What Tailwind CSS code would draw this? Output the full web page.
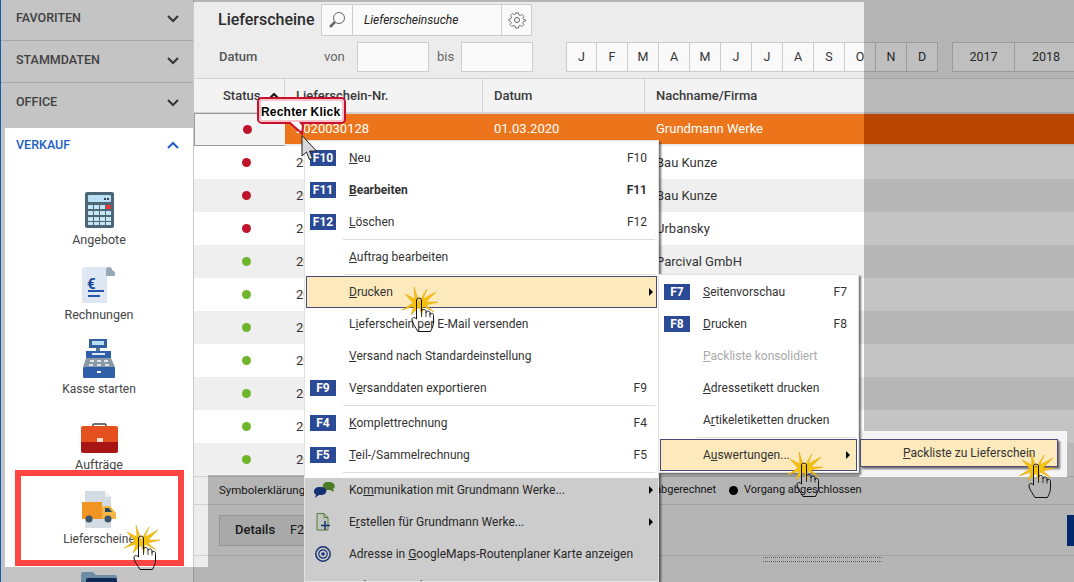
<!DOCTYPE html>
<html lang="de">
<head>
  <meta charset="UTF-8" />
  <title>Lieferscheine</title>
  <script src="https://cdn.jsdelivr.net/npm/@tailwindcss/browser@4"></script>
</head>
<body class="relative w-[1074px] h-[582px] overflow-hidden bg-white font-['Roboto',sans-serif] text-[12px] text-[#333] whitespace-nowrap">

  <!-- shared hand cursor with click star -->
  <svg class="hidden">
    <defs>
      <linearGradient id="handFill" x1="0" y1="0" x2="0" y2="1">
        <stop offset="0.55" stop-color="#ffffff" />
        <stop offset="1" stop-color="#b9b9b9" />
      </linearGradient>
    </defs>
    <symbol id="hand" viewBox="0 0 36 46">
      <polygon points="17,15 25,2 21,12 34,5 24,15 36,15 24,18 32,25 21,19 20,28 17,20 9,28 12,19 0,23 11,16 3,7 13,12 12,0" fill="#f4c20d" stroke="#e3a008" stroke-width="0.5" />
      <path d="M14.500 13c0-2.500 5-2.500 5 0V24c.5-2 4.500-2 4.500.5v1c.5-2 4-2 4 .5v1.500c.5-1.800 3.500-1.500 3.500 1V35c0 4-1.500 6-3 9.500H16C13.500 40 10.500 37 10 33c-.3-2.500 2-3.500 4.500-1z" fill="url(#handFill)" stroke="#111" stroke-width="1" />
      <path d="M24 25v5M28 26.500v4M19.500 24v6" fill="none" stroke="#111" stroke-width="0.8" />
    </symbol>
  </svg>

  <div class="flex h-full">
    <!-- left navigation -->
    <aside class="w-[194px] h-full shrink-0 bg-white border-r border-[#c9c9c9] flex flex-col">
      <div class="h-[41px] shrink-0 pl-4 pr-[14px] pb-[3px] border-b border-[#d9d9d9] flex items-center justify-between font-medium text-[12.5px] text-[#555]">
        <span>FAVORITEN</span>
        <svg width="12" height="8" viewBox="0 0 12 8" fill="none" stroke="#444" stroke-width="2"><path d="M1 1l5 5 5-5" /></svg>
      </div>
      <div class="h-[42px] shrink-0 pl-4 pr-[14px] pb-[2px] border-b border-[#d9d9d9] flex items-center justify-between font-medium text-[12.5px] text-[#555]">
        <span>STAMMDATEN</span>
        <svg width="12" height="8" viewBox="0 0 12 8" fill="none" stroke="#444" stroke-width="2"><path d="M1 1l5 5 5-5" /></svg>
      </div>
      <div class="h-[42px] shrink-0 pl-4 pr-[14px] pb-[3px] flex items-center justify-between font-medium text-[12.5px] text-[#555]">
        <span>OFFICE</span>
        <svg width="12" height="8" viewBox="0 0 12 8" fill="none" stroke="#444" stroke-width="2"><path d="M1 1l5 5 5-5" /></svg>
      </div>
      <div class="h-[51px] shrink-0 pl-4 pr-[14px] pt-[11px] flex items-start justify-between font-medium text-[12.5px] text-[#2160c4]">
        <span class="leading-[18px]">VERKAUF</span>
        <svg class="mt-[5px]" width="12" height="8" viewBox="0 0 12 8" fill="none" stroke="#2160c4" stroke-width="2"><path d="M1 7l5-5 5 5" /></svg>
      </div>

      <div class="h-[75px] shrink-0 flex flex-col items-center pl-[5px] text-[#444]">
        <div class="h-[52px] flex items-end">
          <svg width="29" height="36" viewBox="0 0 29 36">
            <rect width="29" height="36" rx="2" fill="#4d6674" />
            <rect x="3" y="3" width="23" height="7" rx="1" fill="#b9e0f4" />
            <rect x="19" y="6" width="2" height="2" fill="#33434d" /><rect x="22" y="6" width="2" height="2" fill="#33434d" />
            <g fill="#c4e6f6">
              <rect x="3" y="13" width="5" height="4" /><rect x="9" y="13" width="5" height="4" /><rect x="15" y="13" width="5" height="4" /><rect x="21" y="13" width="5" height="4" fill="#e5383b" />
              <rect x="3" y="19" width="5" height="4" /><rect x="9" y="19" width="5" height="4" /><rect x="15" y="19" width="5" height="4" /><rect x="21" y="19" width="5" height="4" />
              <rect x="3" y="25" width="5" height="4" /><rect x="9" y="25" width="5" height="4" /><rect x="15" y="25" width="5" height="4" /><rect x="21" y="25" width="5" height="4" />
              <rect x="3" y="30" width="5" height="3" /><rect x="9" y="30" width="5" height="3" /><rect x="15" y="30" width="5" height="3" /><rect x="21" y="30" width="5" height="3" />
            </g>
          </svg>
        </div>
        <span class="h-[23px] leading-[23px] text-[12.5px]">Angebote</span>
      </div>
      <div class="h-[75px] shrink-0 flex flex-col items-center pl-[5px] text-[#444]">
        <div class="h-[52px] flex items-end relative">
          <svg width="34" height="36" viewBox="0 0 34 36">
            <path d="M0 3a3 3 0 0 1 3-3h22v36H0z" fill="#dfe7f4" />
            <path d="M24 9V3a3 3 0 0 1 6 0 4 4 0 0 1 3 3v3z" fill="#96a9b3" />
            <path d="M6 24h16M6 29h12" stroke="#2458a8" stroke-width="2" />
          </svg>
          <span class="absolute left-[5px] top-[24px] text-[15px] leading-[18px] font-bold text-[#174a96]">€</span>
        </div>
        <span class="h-[23px] leading-[23px] text-[12.5px]">Rechnungen</span>
      </div>
      <div class="h-[75px] shrink-0 flex flex-col items-center pl-[5px] text-[#444]">
        <div class="h-[52px] flex items-end">
          <svg width="32" height="39" viewBox="0 0 32 39">
            <rect x="6" y="0" width="18" height="9" fill="#33609f" /><rect x="9" y="2" width="12" height="4" fill="#b9e0f4" />
            <rect x="13" y="9" width="4" height="3" fill="#5f7c8c" />
            <rect x="3" y="12" width="25" height="7" fill="#2f5fa8" /><rect x="9" y="14" width="13" height="2" fill="#dfe7f4" />
            <path d="M3 19h25l4 9H0z" fill="#8b9aa5" />
            <g fill="#dfe4e8"><rect x="7" y="21" width="4" height="2" /><rect x="14" y="21" width="4" height="2" /><rect x="21" y="21" width="4" height="2" /><rect x="6" y="25" width="4" height="2" /><rect x="14" y="25" width="4" height="2" /><rect x="22" y="25" width="4" height="2" /></g>
            <rect x="0" y="28" width="32" height="11" rx="1" fill="#2f5fa8" /><rect x="14" y="32" width="4" height="2" fill="#fff" />
          </svg>
        </div>
        <span class="h-[23px] leading-[23px]">Kasse starten</span>
      </div>
      <div class="h-[75px] shrink-0 flex flex-col items-center pl-[5px] text-[#444]">
        <div class="h-[52px] flex items-end">
          <svg width="37" height="30" viewBox="0 0 37 30">
            <path d="M12 4V2a1 1 0 0 1 1-1h11a1 1 0 0 1 1 1v2" fill="none" stroke="#444" stroke-width="1.500" />
            <path d="M2 3h33a2 2 0 0 1 2 2v14H0V5a2 2 0 0 1 2-2z" fill="#e5501f" />
            <path d="M0 19h37v9a2 2 0 0 1-2 2H2a2 2 0 0 1-2-2z" fill="#a81515" />
            <rect x="16" y="15" width="6" height="4" fill="#fbdccb" />
          </svg>
        </div>
        <span class="h-[23px] leading-[23px] text-[12.5px]">Aufträge</span>
      </div>
      <div class="h-[75px] shrink-0 flex flex-col items-center pl-[5px] text-[#444]">
        <div class="h-[52px] flex items-end">
          <svg width="34" height="37" viewBox="0 0 34 37">
            <path d="M3 0h20l6 6v31H3z" fill="#d3dce3" /><path d="M23 0v6h6z" fill="#eef2f5" />
            <rect x="0" y="11" width="20" height="17" fill="#f09423" />
            <path d="M20 15h8l6 7v6H20z" fill="#f6b544" /><path d="M23 17h4l3 4h-7z" fill="#2d4a63" />
            <circle cx="7" cy="28" r="3.500" fill="#39566e" /><circle cx="26" cy="28" r="3.500" fill="#39566e" />
          </svg>
        </div>
        <span class="h-[23px] leading-[23px]">Lieferscheine</span>
      </div>
      <div class="h-[75px] shrink-0 flex flex-col items-center pl-[5px]">
        <div class="h-[52px] flex items-end">
          <svg width="36" height="31" viewBox="0 0 36 31">
            <path d="M0 2a2 2 0 0 1 2-2h10l3 3h19a2 2 0 0 1 2 2v24H0z" fill="#8fb6d6" />
            <rect x="5" y="6" width="31" height="25" rx="2" fill="#12386f" />
          </svg>
        </div>
      </div>
    </aside>

    <!-- main column -->
    <main class="flex-1 min-w-0 h-full bg-[#ececec] flex flex-col overflow-hidden">
      <header class="h-[78px] shrink-0 pt-[4px] flex flex-col">
        <div class="h-[32px] flex items-center pl-[24px]">
          <h1 class="w-[103px] text-[16px] font-medium text-[#2b2b2b]">Lieferscheine</h1>
          <div class="flex h-[32px] w-[211px] bg-[#fafafa] border border-[#ccc]">
            <div class="w-[31px] border-r border-[#ccc] flex items-center justify-center">
              <svg width="18" height="18" viewBox="0 0 18 18" fill="none"><circle cx="11" cy="7" r="5.500" stroke="#666" stroke-width="1" /><path d="M7 11l-5 5" stroke="#666" stroke-width="2.500" /></svg>
            </div>
            <div class="w-[148px] pl-[11px] flex items-center italic text-[#222]">Lieferscheinsuche</div>
            <div class="flex-1 border-l border-[#ccc] flex items-center justify-center">
              <svg width="18" height="18" viewBox="0 0 18 18" fill="none" stroke="#666" stroke-width="1"><path d="M7.500 1h3l.5 2.300 1.600.7 2-1.300 2.100 2.100-1.300 2 .7 1.600 2.300.5v1.200l-2.300.5-.7 1.600 1.300 2-2.100 2.100-2-1.300-1.600.7-.5 2.300h-3l-.5-2.300-1.600-.7-2 1.300-2.100-2.100 1.300-2-.7-1.600L0 10V8l2.300-.5.7-1.600-1.300-2 2.100-2.100 2 1.300 1.600-.7z" transform="scale(.9) translate(1 1)" /><circle cx="9" cy="9" r="2.500" /></svg>
            </div>
          </div>
        </div>
        <div class="h-[30px] mt-[6px] flex items-center pl-[25px] text-[#444] text-[13px]">
          <span class="w-[105px] shrink-0 font-medium text-[#555]">Datum</span>
          <span class="w-[33px] shrink-0 text-[#666]">von</span>
          <div class="w-[72px] h-[30px] shrink-0 bg-[#fafafa] border border-[#ccc]"></div>
          <span class="w-[32px] shrink-0 pl-[8px] text-[#666]">bis</span>
          <div class="w-[72px] h-[30px] shrink-0 bg-[#fafafa] border border-[#ccc]"></div>
          <div class="ml-[33px] shrink-0 flex text-[12.5px] text-[#333]">
            <span class="w-[31px] h-[30px] bg-[#f9f9f9] border border-[#ccc] flex items-center justify-center">J</span>
            <span class="w-[31px] h-[30px] bg-[#f9f9f9] border border-l-0 border-[#ccc] flex items-center justify-center">F</span>
            <span class="w-[31px] h-[30px] bg-[#f9f9f9] border border-l-0 border-[#ccc] flex items-center justify-center">M</span>
            <span class="w-[31px] h-[30px] bg-[#f9f9f9] border border-l-0 border-[#ccc] flex items-center justify-center">A</span>
            <span class="w-[31px] h-[30px] bg-[#f9f9f9] border border-l-0 border-[#ccc] flex items-center justify-center">M</span>
            <span class="w-[31px] h-[30px] bg-[#f9f9f9] border border-l-0 border-[#ccc] flex items-center justify-center">J</span>
            <span class="w-[31px] h-[30px] bg-[#f9f9f9] border border-l-0 border-[#ccc] flex items-center justify-center">J</span>
            <span class="w-[31px] h-[30px] bg-[#f9f9f9] border border-l-0 border-[#ccc] flex items-center justify-center">A</span>
            <span class="w-[31px] h-[30px] bg-[#f9f9f9] border border-l-0 border-[#ccc] flex items-center justify-center">S</span>
            <span class="w-[31px] h-[30px] bg-[#f9f9f9] border border-l-0 border-[#ccc] flex items-center justify-center">O</span>
            <span class="w-[31px] h-[30px] bg-[#f9f9f9] border border-l-0 border-[#ccc] flex items-center justify-center">N</span>
            <span class="w-[31px] h-[30px] bg-[#f9f9f9] border border-l-0 border-[#ccc] flex items-center justify-center">D</span>
            <span class="ml-[14px] w-[63px] h-[30px] bg-[#f9f9f9] border border-[#ccc] flex items-center justify-center">2017</span>
            <span class="w-[63px] h-[30px] bg-[#f9f9f9] border border-l-0 border-[#ccc] flex items-center justify-center">2018</span>
          </div>
        </div>
      </header>

      <!-- table -->
      <div class="h-[36px] shrink-0 bg-[#f3f3f3] border-t border-b-2 border-[#d2d2d2] grid grid-cols-[91px_198px_162px_1fr] items-center font-medium text-[13px] text-[#3a3a3a]">
        <div class="h-full pl-[29px] pr-[5px] pt-px flex items-center justify-between border-r border-[#d2d2d2]">Status
          <svg width="10" height="6" viewBox="0 0 10 6" fill="none" stroke="#111" stroke-width="2"><path d="M1 5l4-4 4 4" /></svg>
        </div>
        <div class="h-full pl-[11px] pt-px flex items-center border-r border-[#d2d2d2]">Lieferschein-Nr.</div>
        <div class="h-full pl-[11px] pt-px flex items-center border-r border-[#d2d2d2]">Datum</div>
        <div class="h-full pl-[11px] pt-px flex items-center">Nachname/Firma</div>
      </div>
      <div id="rows" class="flex flex-col shrink-0 text-[13px]"></div>

      <!-- legend and details -->
      <div class="h-[29px] shrink-0 border-y border-[#d2d2d2] pl-[25px] flex items-center text-[11px]">
        <span class="w-[380px] shrink-0 text-[11.5px] text-[#222]">Symbolerklärung:</span>
        <span class="w-[117px] shrink-0 text-right text-[#222]">Vorgang abgerechnet</span>
        <span class="w-[9px] h-[9px] shrink-0 ml-[13px] mr-[6px] rounded-full bg-black"></span>
        <span class="text-[#222]">Vorgang abgeschlossen</span>
      </div>
      <div class="h-[51px] shrink-0 border-b border-[#d2d2d2] pl-[25px] flex items-center justify-between">
        <div class="w-[120px] h-[31px] bg-[#dcdcdc] border border-[#c2c2c2] pl-[15px] flex items-center font-medium text-[13px] text-[#222]">Details<span class="ml-[15px] font-normal text-[12.5px]">F2</span></div>
        <div class="w-[7px] h-[31px] bg-[#00378c]"></div>
      </div>
      <div class="ml-[569px] mt-[1px] w-[119px] h-[5px] border-y border-dotted border-[#777]"></div>
    </main>
  </div>

  <!-- dimmed parts of the screen -->
  <div class="absolute left-0 top-0 w-[193px] h-[128px] bg-black/[.23]"></div>
  <div class="absolute left-0 top-[128px] w-[5px] h-[439px] bg-black/[.23]"></div>
  <div class="absolute left-0 top-[567px] w-[208px] h-[15px] bg-black/[.23]"></div>
  <div class="absolute left-[193px] top-0 w-[881px] h-[2px] bg-black/[.23]"></div>
  <div class="absolute left-[864px] top-[2px] w-[210px] h-[473px] bg-black/[.23]"></div>
  <div class="absolute left-[208px] top-[475px] w-[866px] h-[107px] bg-black/[.23]"></div>
  <div class="absolute left-[864px] top-[114px] w-[210px] h-[30px] bg-[#b94500]"></div>
  <div class="absolute left-0 top-0 w-px h-full bg-[#0f5cb0]"></div>

  <!-- red frame round Lieferscheine -->
  <div class="absolute left-[15px] top-[470px] w-[169px] h-[96px] border-[6px] border-[#ff4444]"></div>

  <!-- context menu -->
  <div class="absolute left-[304px] top-[140px] w-[355px] h-[442px] overflow-hidden pt-[1px] bg-white border border-[#e2e2e2] shadow-[2px_2px_2px_rgba(0,0,0,.55)] flex flex-col">
    <div class="h-8 shrink-0 mx-px border border-transparent pl-[3px] pr-[9px] flex items-center"><span class="w-[26px] h-4 mr-[13px] bg-[#2a4a96] text-white font-bold leading-4 text-center">F10</span><span><u>N</u>eu</span><span class="ml-auto">F10</span></div>
    <div class="h-8 shrink-0 mx-px border border-transparent pl-[3px] pr-[9px] flex items-center font-bold"><span class="w-[26px] h-4 mr-[13px] bg-[#2a4a96] text-white font-bold leading-4 text-center">F11</span><span><u>B</u>earbeiten</span><span class="ml-auto">F11</span></div>
    <div class="h-8 shrink-0 mx-px border border-transparent pl-[3px] pr-[9px] flex items-center"><span class="w-[26px] h-4 mr-[13px] bg-[#2a4a96] text-white font-bold leading-4 text-center">F12</span><span><u>L</u>öschen</span><span class="ml-auto">F12</span></div>
    <div class="h-px shrink-0 my-px ml-[38px] mr-[3px] bg-[#ddd]"></div>
    <div class="h-8 shrink-0 mx-px border border-transparent pl-[42px] pr-[9px] flex items-center"><span><u>A</u>uftrag bearbeiten</span></div>
    <div class="h-px shrink-0 my-px ml-[38px] mr-[3px] bg-[#ddd]"></div>
    <div class="h-8 shrink-0 mx-px border border-[#4a4a7a] bg-[#fdeabc] pl-[42px] pr-[3px] flex items-center"><span><u>D</u>rucken</span><span class="ml-auto w-0 h-0 border-y-4 border-y-transparent border-l-4 border-l-black"></span></div>
    <div class="h-8 shrink-0 mx-px border border-transparent pl-[42px] pr-[9px] flex items-center"><span>L<u>i</u>eferschein per E-Mail versenden</span></div>
    <div class="h-8 shrink-0 mx-px border border-transparent pl-[42px] pr-[9px] flex items-center"><span><u>V</u>ersand nach Standardeinstellung</span></div>
    <div class="h-8 shrink-0 mx-px border border-transparent pl-[3px] pr-[9px] flex items-center"><span class="w-[26px] h-4 mr-[13px] bg-[#2a4a96] text-white font-bold leading-4 text-center">F9</span><span>V<u>e</u>rsanddaten exportieren</span><span class="ml-auto">F9</span></div>
    <div class="h-px shrink-0 my-px ml-[38px] mr-[3px] bg-[#ddd]"></div>
    <div class="h-8 shrink-0 mx-px border border-transparent pl-[3px] pr-[9px] flex items-center"><span class="w-[26px] h-4 mr-[13px] bg-[#2a4a96] text-white font-bold leading-4 text-center">F4</span><span><u>K</u>omplettrechnung</span><span class="ml-auto">F4</span></div>
    <div class="h-8 shrink-0 mx-px border border-transparent pl-[3px] pr-[9px] flex items-center"><span class="w-[26px] h-4 mr-[13px] bg-[#2a4a96] text-white font-bold leading-4 text-center">F5</span><span><u>T</u>eil-/Sammelrechnung</span><span class="ml-auto">F5</span></div>
    <div class="h-px shrink-0 my-px ml-[38px] mr-[3px] bg-[#ddd]"></div>
    <div class="h-8 shrink-0 mx-px border border-transparent pl-[3px] pr-[3px] flex items-center">
      <svg class="w-[26px] mr-[13px]" width="26" height="16" viewBox="0 0 26 16"><path d="M13 3a5 4 0 0 1 5-3h2a5 4 0 0 1 3 7l1 3-4-2h-3a5 4 0 0 1-4-5z" fill="#5d9a2d" /><path d="M4 9a5 4 0 0 1 5-4h2a5 4 0 0 1 1 8H9l-4 3 1-3a5 4 0 0 1-2-4z" fill="#1c3f8f" /></svg>
      <span>Ko<u>m</u>munikation mit Grundmann Werke...</span><span class="ml-auto w-0 h-0 border-y-4 border-y-transparent border-l-4 border-l-black"></span>
    </div>
    <div class="h-8 shrink-0 mx-px border border-transparent pl-[3px] pr-[3px] flex items-center">
      <svg class="w-[26px] mr-[13px]" width="26" height="18" viewBox="0 0 26 18" fill="none"><path d="M7 .5h7l4 4v12.500H7z" fill="#f3f6ee" stroke="#6c9a42" /><path d="M14 .5v4h4" stroke="#6c9a42" /><path d="M15 8v9M11 12.500h9" stroke="#1c3f8f" stroke-width="1.500" /></svg>
      <span>E<u>r</u>stellen für Grundmann Werke...</span><span class="ml-auto w-0 h-0 border-y-4 border-y-transparent border-l-4 border-l-black"></span>
    </div>
    <div class="h-8 shrink-0 mx-px border border-transparent pl-[3px] pr-[9px] flex items-center">
      <svg class="w-[26px] mr-[13px]" width="26" height="16" viewBox="0 0 26 16" fill="none" stroke="#1c3f8f"><circle cx="13" cy="8" r="7.200" stroke-width="1.500" /><circle cx="13" cy="8" r="4.200" stroke-width="1.200" /><circle cx="13" cy="8" r="1.800" fill="#1c3f8f" stroke="none" /></svg>
      <span>Adresse in <u>G</u>oogleMaps-Routenplaner Karte anzeigen</span>
    </div>
    <div class="h-8 shrink-0 mx-px border border-transparent pl-[42px] pr-[9px] flex items-center"><span>Gehe zu Kunden</span></div>
    <div class="absolute left-0 right-0 top-[337px] bottom-0 bg-black/20"></div>
  </div>

  <!-- lit area round the last sub menu -->
  <div class="absolute left-[859px] top-[431px] w-[208px] h-[46px] bg-[#f4f4f4]"></div>

  <!-- Drucken sub menu -->
  <div class="absolute left-[658px] top-[274px] w-[201px] h-[199px] pt-px bg-white border border-[#e2e2e2] shadow-[2px_2px_2px_rgba(0,0,0,.55)] flex flex-col">
    <div class="h-8 shrink-0 mx-px pl-[4px] pr-[10px] flex items-center"><span class="w-[26px] h-4 mr-[13px] bg-[#2a4a96] text-white font-bold leading-4 text-center">F7</span><span><u>S</u>eitenvorschau</span><span class="ml-auto">F7</span></div>
    <div class="h-8 shrink-0 mx-px pl-[4px] pr-[10px] flex items-center"><span class="w-[26px] h-4 mr-[13px] bg-[#2a4a96] text-white font-bold leading-4 text-center">F8</span><span><u>D</u>rucken</span><span class="ml-auto">F8</span></div>
    <div class="h-8 shrink-0 mx-px pl-[43px] flex items-center text-[#aaa]"><span><u>P</u>ackliste konsolidiert</span></div>
    <div class="h-8 shrink-0 mx-px pl-[43px] flex items-center"><span><u>A</u>dressetikett drucken</span></div>
    <div class="h-8 shrink-0 mx-px pl-[43px] flex items-center"><span>A<u>r</u>tikeletiketten drucken</span></div>
    <div class="h-px shrink-0 my-px ml-[38px] mr-[3px] bg-[#ddd]"></div>
    <div class="h-8 shrink-0 mx-px border border-[#4a4a7a] bg-[#fdeabc] pl-[42px] pr-[6px] flex items-center"><span>A<u>u</u>swertungen...</span><span class="ml-auto w-0 h-0 border-y-4 border-y-transparent border-l-4 border-l-black"></span></div>
  </div>

  <!-- Auswertungen sub menu -->
  <div class="absolute left-[860px] top-[439px] w-[198px] h-[28px] pl-[42px] border border-[#4a4a7a] bg-[#fdeabc] shadow-[2px_2px_2px_rgba(0,0,0,.55)] flex items-center"><span><u>P</u>ackliste zu Lieferschein</span></div>

  <!-- balloon and pointers -->
  <div class="absolute left-[255px] top-[95px] w-[92px] h-[42px]">
    <svg class="absolute inset-0" width="92" height="42" viewBox="0 0 92 42">
      <path d="M7 3h79a4 4 0 0 1 4 4v17a4 4 0 0 1-4 4H46l2 2.500-1 8-12-10.500H7a4 4 0 0 1-4-4V7a4 4 0 0 1 4-4z" fill="#fff" stroke="#c8102e" stroke-width="2" />
      <path d="M8 5h77a3 3 0 0 1 3 3v15a3 3 0 0 1-3 3H8a3 3 0 0 1-3-3V8a3 3 0 0 1 3-3z" fill="none" stroke="#f9c3cd" stroke-width="2" />
    </svg>
    <span class="absolute left-[6px] top-[8px] font-['Liberation_Sans',sans-serif] font-bold text-[12px] leading-[18px] tracking-[.2px] text-black">Rechter Klick</span>
  </div>
  <svg class="absolute left-[301px] top-[135px]" width="17" height="26" viewBox="0 0 17 26"><path d="M1 .5V21l4.500-4 3 7.500 3-1.200-3-7.300h7z" fill="#d9d9d9" stroke="#222" stroke-width="1" /></svg>

  <svg class="absolute left-[124px] top-[525px]" width="36" height="46"><use href="#hand" /></svg>
  <svg class="absolute left-[402px] top-[287px]" width="36" height="46"><use href="#hand" /></svg>
  <svg class="absolute left-[787px] top-[452px]" width="36" height="46"><use href="#hand" /></svg>
  <svg class="absolute left-[1019px] top-[453px]" width="36" height="46"><use href="#hand" /></svg>

  <script>
    const rows = [
      ["2020030127", "28.02.2020", "Bau Kunze", "bg-[#c0142a]"],
      ["2020030126", "27.02.2020", "Bau Kunze", "bg-[#c0142a]"],
      ["2020030125", "26.02.2020", "Urbansky", "bg-[#c0142a]"],
      ["2020030124", "25.02.2020", "Parcival GmbH", "bg-[#6fb52c]"],
      ["2020030123", "24.02.2020", "", "bg-[#6fb52c]"],
      ["2020030122", "21.02.2020", "", "bg-[#6fb52c]"],
      ["2020030121", "20.02.2020", "", "bg-[#6fb52c]"],
      ["2020030120", "19.02.2020", "", "bg-[#6fb52c]"],
      ["2020030119", "18.02.2020", "", "bg-[#6fb52c]"],
      ["2020030118", "17.02.2020", "", "bg-[#6fb52c]"]
    ];

    let html = `<div class="h-[32px] grid grid-cols-[91px_198px_162px_1fr] items-stretch">
      <div class="-mt-px bg-[#f3f3f3] border border-[#999] border-r-0 pl-[14px] flex items-center justify-center"><span class="w-[9px] h-[9px] rounded-full bg-[#c0142a]"></span></div>
      <div class="mb-[2px] bg-[#ec751c] text-white pl-[11px] flex items-center">2020030128</div>
      <div class="mb-[2px] bg-[#ec751c] text-white pl-[11px] flex items-center">01.03.2020</div>
      <div class="mb-[2px] bg-[#ec751c] text-white pl-[11px] flex items-center">Grundmann Werke</div>
    </div>`;

    rows.forEach((row, i) => {
      const stripe = i % 2 ? "bg-[#efefef]" : "bg-white";
      html += `<div class="h-[33px] grid grid-cols-[91px_198px_162px_1fr] items-center ${stripe}">
        <div class="pl-[14px] flex justify-center"><span class="w-[9px] h-[9px] rounded-full ${row[3]}"></span></div>
        <div class="pl-[11px] pt-px">${row[0]}</div>
        <div class="pl-[11px] pt-px">${row[1]}</div>
        <div class="pl-[11px] pt-px">${row[2]}</div>
      </div>`;
    });

    document.getElementById("rows").innerHTML = html;
  </script>
</body>
</html>
